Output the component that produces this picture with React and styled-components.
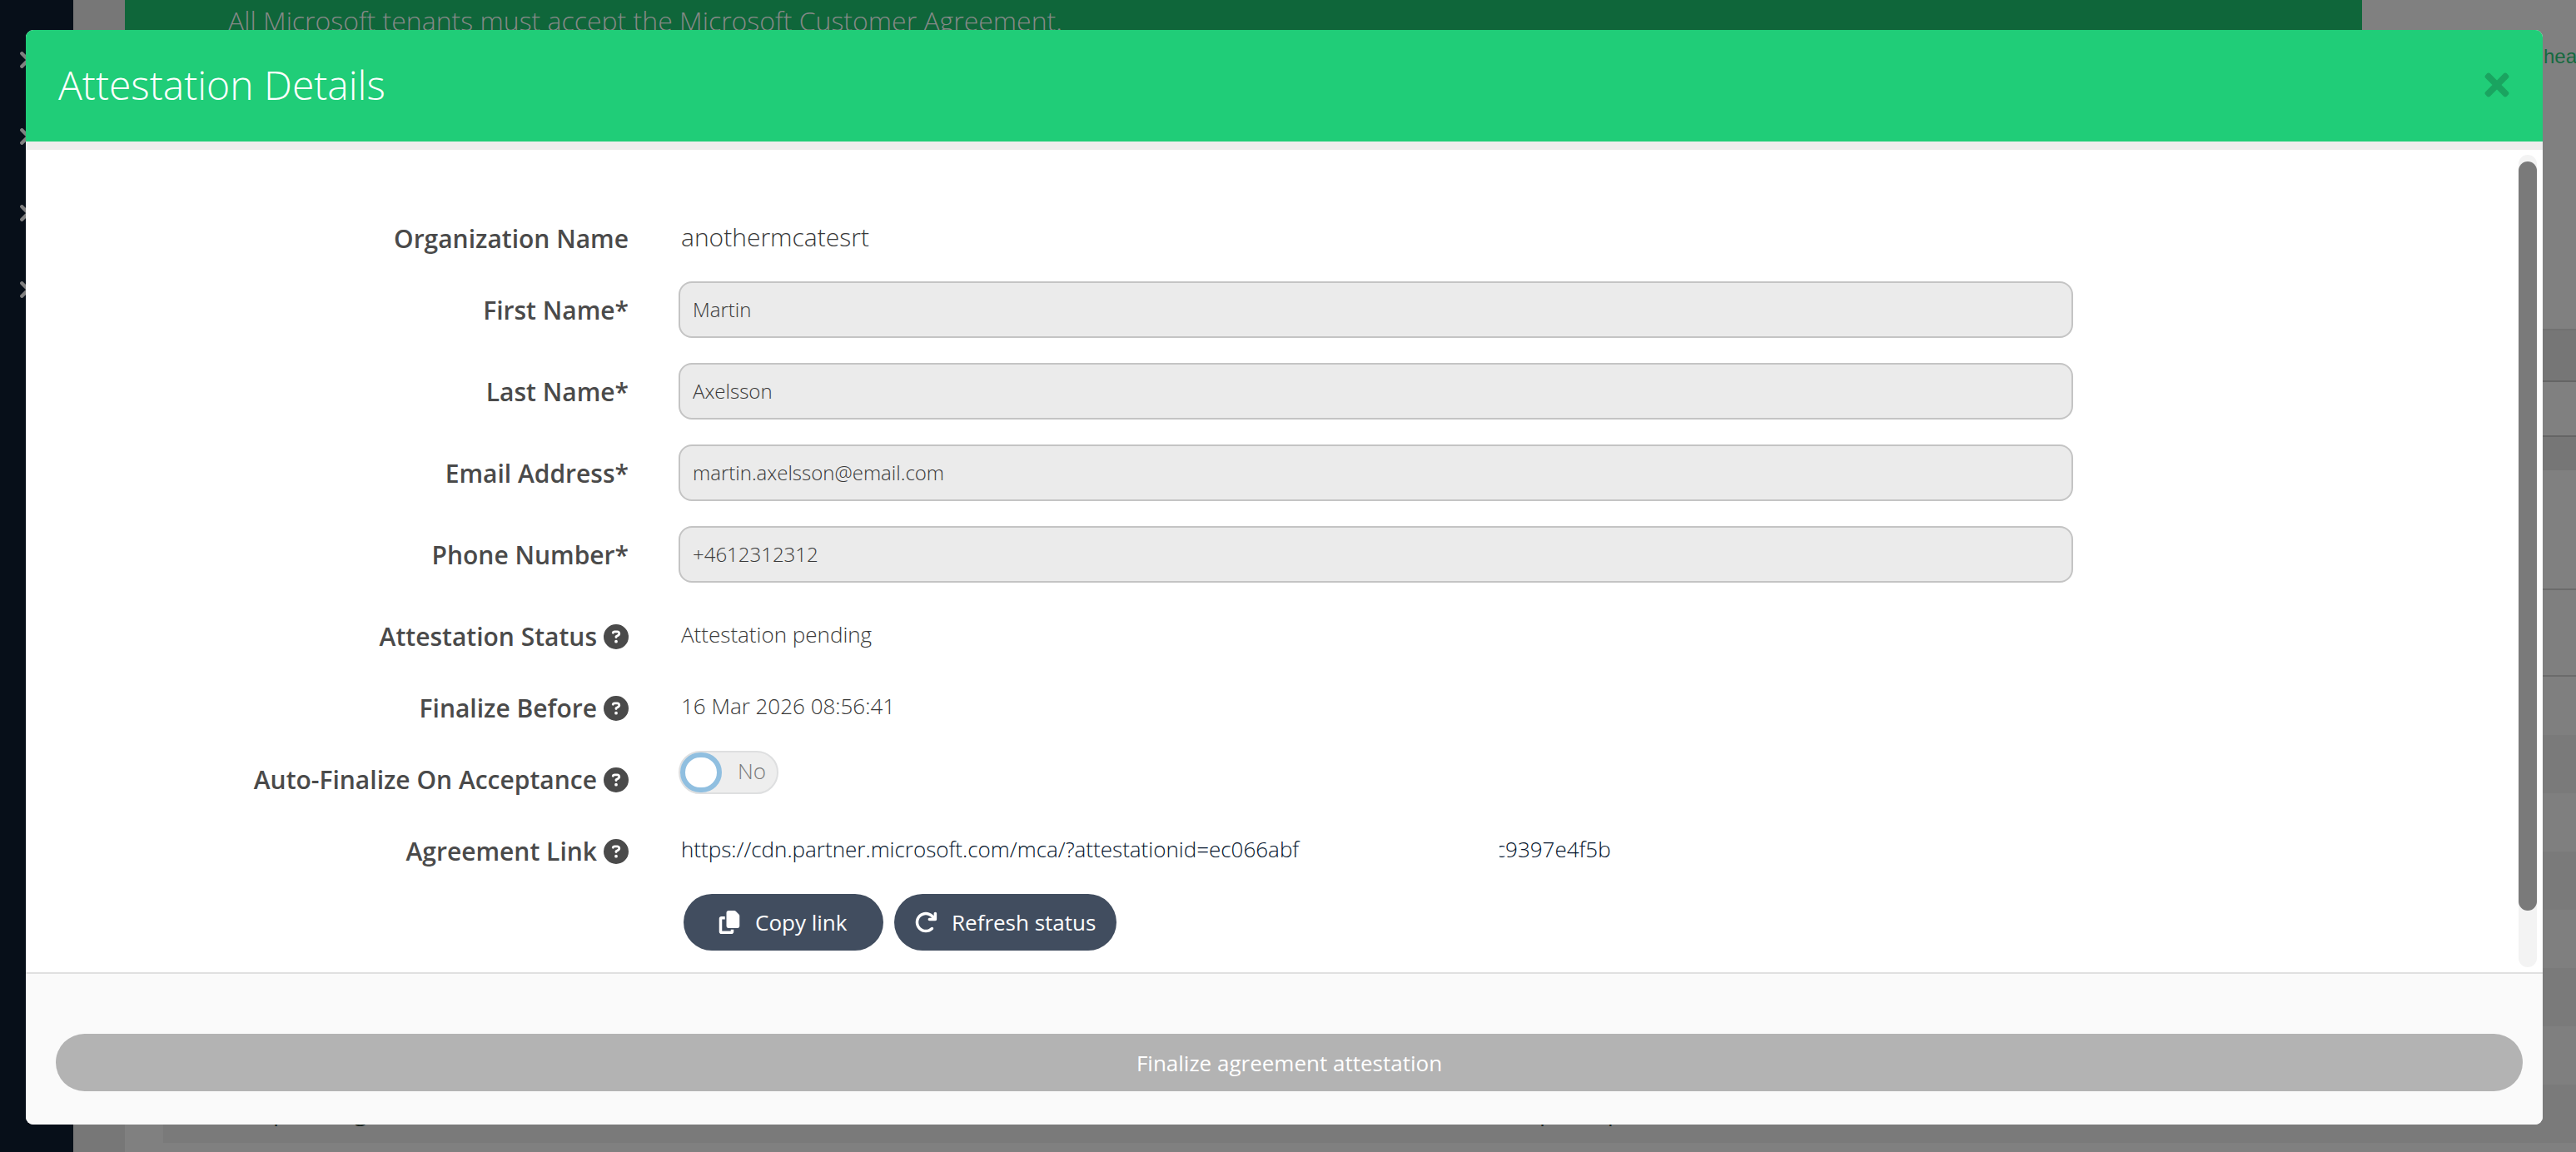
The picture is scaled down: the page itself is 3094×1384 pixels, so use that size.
import React from "react";
import styled, { createGlobalStyle } from "styled-components";
import {
	FaArrowRotateRight,
	FaCircleQuestion,
	FaCopy,
} from "react-icons/fa6";
import { FaTimes } from "react-icons/fa";

const contactFields = [
	{ label: "First Name*", value: "Martin" },
	{ label: "Last Name*", value: "Axelsson" },
	{ label: "Email Address*", value: "martin.axelsson@email.com" },
	{ label: "Phone Number*", value: "+4612312312" },
];

const tableRows = [
	{ height: 62, color: "#767676", top: "#717171" },
	{ height: 66, color: "#808080", top: "#656565" },
	{ height: 42, color: "#767676", top: "#656565" },
	{ height: 142, color: "#808080" },
	{ height: 104, color: "#7f7f7f", top: "#6b6b6b" },
	{ height: 72, color: "#7f7f7f", top: "#6b6b6b" },
	{ height: 70, color: "#7a7a7a" },
	{ height: 70, color: "#7f7f7f" },
	{ height: 70, color: "#7a7a7a" },
	{ height: 70, color: "#7f7f7f" },
	{ height: 70, color: "#7a7a7a" },
	{ height: 70, color: "#7f7f7f" },
];

function HelpLabel({ children }) {
	return (
		<Label>
			{children}
			<FaCircleQuestion />
		</Label>
	);
}

function Backdrop() {
	return (
		<Page>
			<Sidebar>
				{[0, 1, 2, 3].map((item) => (
					<Chevron key={item} viewBox="0 0 14 20">
						<path d="M2.3 2.3 10 10 2.3 17.7" />
					</Chevron>
				))}
			</Sidebar>
			<Gutter />
			<Content>
				<TopArea>
					<Banner>
						All Microsoft tenants must accept the Microsoft Customer Agreement.
					</Banner>
					<TopLink>hea</TopLink>
				</TopArea>
				<Table>
					{tableRows.map((row, index) => (
						<TableRow
							key={index}
							$height={row.height}
							$color={row.color}
							$top={row.top}
						/>
					))}
					<TableRow $height={70} $color="#7a7a7a">
						<FirstCell>pending</FirstCell>
						<SecondCell>participants</SecondCell>
					</TableRow>
				</Table>
			</Content>
		</Page>
	);
}

function App() {
	return (
		<>
			<GlobalStyle />
			<Backdrop />
			<Modal>
				<Header>
					<Title>Attestation Details</Title>
					<CloseButton>
						<FaTimes />
					</CloseButton>
				</Header>
				<Body>
					<Form>
						<Row>
							<Label>Organization Name</Label>
							<Value $large>anothermcatesrt</Value>
						</Row>
						{contactFields.map((field) => (
							<Row key={field.label} $tall>
								<Label>{field.label}</Label>
								<Input value={field.value} disabled readOnly />
							</Row>
						))}
						<Row>
							<HelpLabel>Attestation Status</HelpLabel>
							<Value>Attestation pending</Value>
						</Row>
						<Row>
							<HelpLabel>Finalize Before</HelpLabel>
							<Value>16 Mar 2026 08:56:41</Value>
						</Row>
						<Row>
							<HelpLabel>Auto-Finalize On Acceptance</HelpLabel>
							<Toggle>
								<Knob />
								<ToggleText>No</ToggleText>
							</Toggle>
						</Row>
						<Row>
							<HelpLabel>Agreement Link</HelpLabel>
							<Link>
								https://cdn.partner.microsoft.com/mca/?attestationid=ec066abf
								<Redacted />
								c9397e4f5b
							</Link>
						</Row>
						<Actions>
							<ActionButton $width="240px" $indent="41px">
								<FaCopy />
								Copy link
							</ActionButton>
							<ActionButton $width="267px" $indent="24px">
								<FaArrowRotateRight />
								Refresh status
							</ActionButton>
						</Actions>
					</Form>
					<ScrollTrack>
						<ScrollThumb />
					</ScrollTrack>
				</Body>
				<Footer>
					<FinalizeButton disabled>Finalize agreement attestation</FinalizeButton>
				</Footer>
			</Modal>
		</>
	);
}

export default App;

const GlobalStyle = createGlobalStyle`
	* {
		box-sizing: border-box;
	}
	body {
		margin: 0;
		overflow: hidden;
		font-family: "Open Sans", sans-serif;
		font-weight: 300;
		color: #4a4a4a;
	}
`;

const Page = styled.div`
	display: flex;
	height: 1384px;
	overflow: hidden;
	background: #808080;
`;

const Sidebar = styled.div`
	display: flex;
	flex-direction: column;
	gap: 72px;
	width: 88px;
	padding: 62px 0 0 24px;
	background: #070f19;
`;

const Chevron = styled.svg`
	flex: none;
	width: 14px;
	height: 20px;
	fill: none;
	stroke: #808080;
	stroke-width: 4.4;
	stroke-linecap: round;
	stroke-linejoin: round;
`;

const Gutter = styled.div`
	width: 62px;
	background: #777777;
`;

const Content = styled.div`
	flex: 1;
	min-width: 0;
`;

const TopArea = styled.div`
	display: flex;
	align-items: flex-start;
	height: 395px;
`;

const Banner = styled.div`
	flex: none;
	width: 2687px;
	height: 90px;
	padding-left: 124px;
	background: #0f663a;
	color: #868a88;
	font-size: 32px;
	line-height: 49px;
`;

const TopLink = styled.div`
	margin: 54px 0 0 218px;
	color: #156a3f;
	font: 24px/28px "Liberation Sans", Arial, sans-serif;
`;

const Table = styled.div`
	margin-left: 46px;
`;

const TableRow = styled.div`
	display: flex;
	height: ${({ $height }) => $height}px;
	background: ${({ $color }) => $color};
	border-top: ${({ $top }) => ($top ? `2px solid ${$top}` : "none")};
	color: #18231d;
	font-size: 28px;
	font-weight: 400;
	line-height: 64px;
`;

const FirstCell = styled.div`
	width: 1521px;
	padding-left: 132px;
	letter-spacing: 1px;
`;

const SecondCell = styled.div`
	padding-left: 132px;
`;

const Modal = styled.div`
	position: absolute;
	top: 36px;
	left: 31px;
	display: flex;
	flex-direction: column;
	width: 3023px;
	height: 1315px;
	overflow: hidden;
	border-radius: 9px;
	background: #ffffff;
`;

const Header = styled.div`
	display: flex;
	align-items: center;
	justify-content: space-between;
	height: 144px;
	padding: 0 34px 3px 39px;
	background: #20cd78;
	border-bottom: 10px solid #ededed;
`;

const Title = styled.h1`
	margin: 0;
	color: #ffffff;
	font-size: 48px;
	font-weight: 300;
	line-height: 66px;
`;

const CloseButton = styled.button`
	display: flex;
	padding: 0;
	border: none;
	background: none;
	color: #1aa460;
	font-size: 42px;
`;

const Body = styled.div`
	display: flex;
	justify-content: space-between;
	height: 988px;
`;

const Form = styled.div`
	padding-top: 72px;
`;

const Row = styled.div`
	display: grid;
	grid-template-columns: 724px 1675px;
	column-gap: 60px;
	height: ${({ $tall }) => ($tall ? "68px" : "56px")};
	margin-bottom: 30px;
`;

const Label = styled.label`
	display: flex;
	justify-content: flex-end;
	gap: 8px;
	padding-top: 12px;
	font-size: 30px;
	font-weight: 600;
	line-height: 45px;
	white-space: nowrap;

	svg {
		margin-top: 8px;
	}
`;

const Value = styled.div`
	padding-left: 3px;
	color: #383838;
	font-size: ${({ $large }) => ($large ? "30px" : "26px")};
	line-height: ${({ $large }) => ($large ? "65px" : "64px")};
`;

const Input = styled.input`
	width: 100%;
	height: 68px;
	padding: 0 15px 1px;
	border: 2px solid #c4c4c4;
	border-radius: 16px;
	background: #ebebeb;
	color: #383838;
	font: 300 24px "Open Sans", sans-serif;
`;

const Toggle = styled.div`
	display: flex;
	width: 120px;
	height: 52px;
	border: 2px solid #dedfe0;
	border-radius: 26px;
	background: #eeeeee;
`;

const Knob = styled.div`
	width: 50px;
	height: 48px;
	border: 6px solid #90bfe0;
	border-radius: 25px;
	background: #ffffff;
`;

const ToggleText = styled.span`
	margin-left: 19px;
	color: #7a7a7a;
	font-size: 26px;
	line-height: 44px;
`;

const Link = styled.a`
	padding-left: 3px;
	color: #04142c;
	font-size: 26px;
	line-height: 64px;
	white-space: nowrap;
`;

// Covers the middle of the attestation id
const Redacted = styled.span`
	position: relative;
	display: inline-block;
	width: 239px;
	height: 36px;
	margin: 0 -5.5px 0 2px;
	background: #ffffff;
	vertical-align: middle;
`;

const Actions = styled.div`
	display: flex;
	gap: 13px;
	padding-left: 790px;
`;

const ActionButton = styled.button`
	display: flex;
	align-items: center;
	gap: 17px;
	width: ${({ $width }) => $width};
	height: 68px;
	padding: 0 0 0 ${({ $indent }) => $indent};
	border: none;
	border-radius: 34px;
	background: #414d5f;
	color: #ffffff;
	font: 500 26px "Open Sans", sans-serif;
	white-space: nowrap;

	svg {
		flex: none;
		width: 28px;
		height: 28px;
	}
`;

const ScrollTrack = styled.div`
	width: 22px;
	height: 976px;
	margin: 6px 7px 0 0;
	padding-top: 8px;
	border-radius: 11px;
	background: #f3f3f3;
`;

const ScrollThumb = styled.div`
	height: 900px;
	border-radius: 11px;
	background: #7a7a7a;
`;

const Footer = styled.div`
	flex: 1;
	padding: 72px 24px 40px 36px;
	border-top: 2px solid #e0e0e0;
	background: #fafafa;
`;

const FinalizeButton = styled.button`
	width: 100%;
	height: 69px;
	border: none;
	border-radius: 35px;
	background: #b3b3b3;
	color: #ffffff;
	font: 500 26px "Open Sans", sans-serif;
`;
